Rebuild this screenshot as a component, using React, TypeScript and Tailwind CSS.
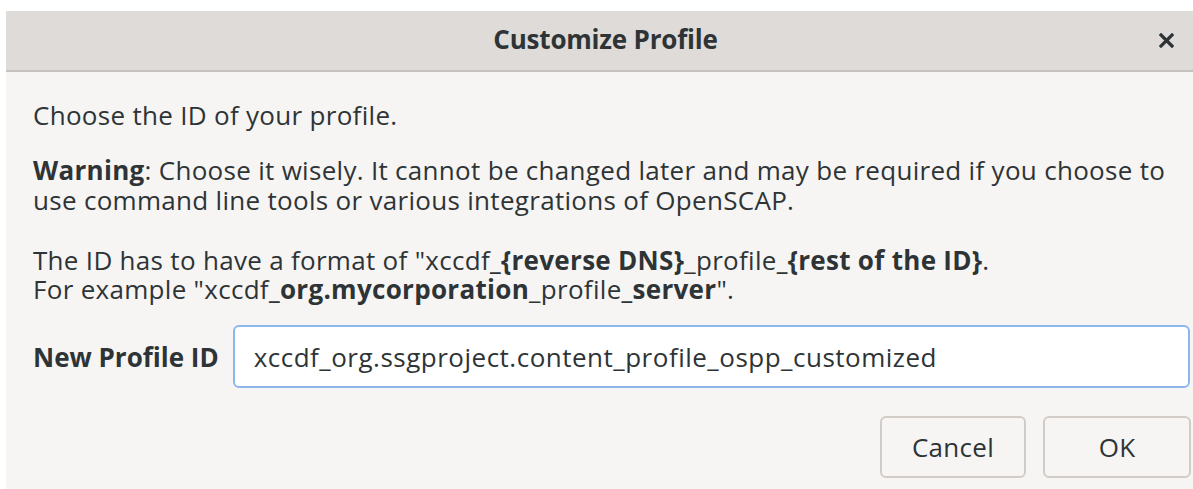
import React, { useState } from 'react';

const font = { fontFamily: '"Open Sans", "Noto Sans", sans-serif' };

export default function App() {
  const [profileId, setProfileId] = useState('xccdf_org.ssgproject.content_profile_ospp_customized');

  return (
    <div className="w-[1193px] h-[489px] bg-white pl-[6px] pt-[11px] overflow-hidden" style={font}>
      <div className="flex flex-col h-full bg-[#f6f5f4] text-[#2e3436]">
        {/* header bar */}
        <div className="relative flex items-center justify-center h-[61px] pl-[12px] bg-[#dedbd8] border-b-2 border-[#c7c2bd] shrink-0">
          <span className="text-[26px] font-bold tracking-[-0.2px] -mt-[2px]">Customize Profile</span>
          <button className="absolute right-[15px] top-[17px] w-[24px] h-[24px] flex items-center justify-center">
            <svg width="15" height="15" viewBox="0 0 15 15">
              <path d="M2 2 L13 13 M13 2 L2 13" stroke="#2e3436" strokeWidth="3.2" strokeLinecap="square" />
            </svg>
          </button>
        </div>

        {/* dialog body */}
        <div className="flex flex-col px-[27px] pt-[28px] text-[26px] leading-[30px] tracking-[0.3px]">
          <p>Choose the ID of your profile.</p>
          <p className="mt-[25px]">
            <b className="font-bold">Warning</b>: Choose it wisely. It cannot be changed later and may be required if you choose to use command line tools or various integrations of OpenSCAP.
          </p>
          <p className="mt-[31px] leading-[29px]">
            The ID has to have a format of "xccdf<b>_{'{reverse DNS}'}</b>_profile<b>_{'{rest of the ID}'}</b>.
            <br />
            For example "xccdf<b>_org.mycorporation</b>_profile<b>_server</b>".
          </p>

          <div className="flex items-center mt-[21px]">
            <label className="font-bold mr-[14px] tracking-normal whitespace-nowrap">New Profile ID</label>
            <input
              value={profileId}
              onChange={(e) => setProfileId(e.target.value)}
              className="flex-1 h-[63px] -mr-[24px] px-[19px] bg-white border-2 border-[#8cb6ec] rounded-[6px] outline-none text-[26px] tracking-[0.5px] text-[#2e3436]"
            />
          </div>

          <div className="flex justify-end gap-[17px] mt-[28px] -mr-[25px]">
            <button className="w-[146px] h-[62px] rounded-[6px] border-2 border-[#d2ccc7] bg-[#f6f5f4] text-[26px]">Cancel</button>
            <button className="w-[148px] h-[62px] rounded-[6px] border-2 border-[#d2ccc7] bg-[#f6f5f4] text-[26px]">OK</button>
          </div>
        </div>
      </div>
    </div>
  );
}
